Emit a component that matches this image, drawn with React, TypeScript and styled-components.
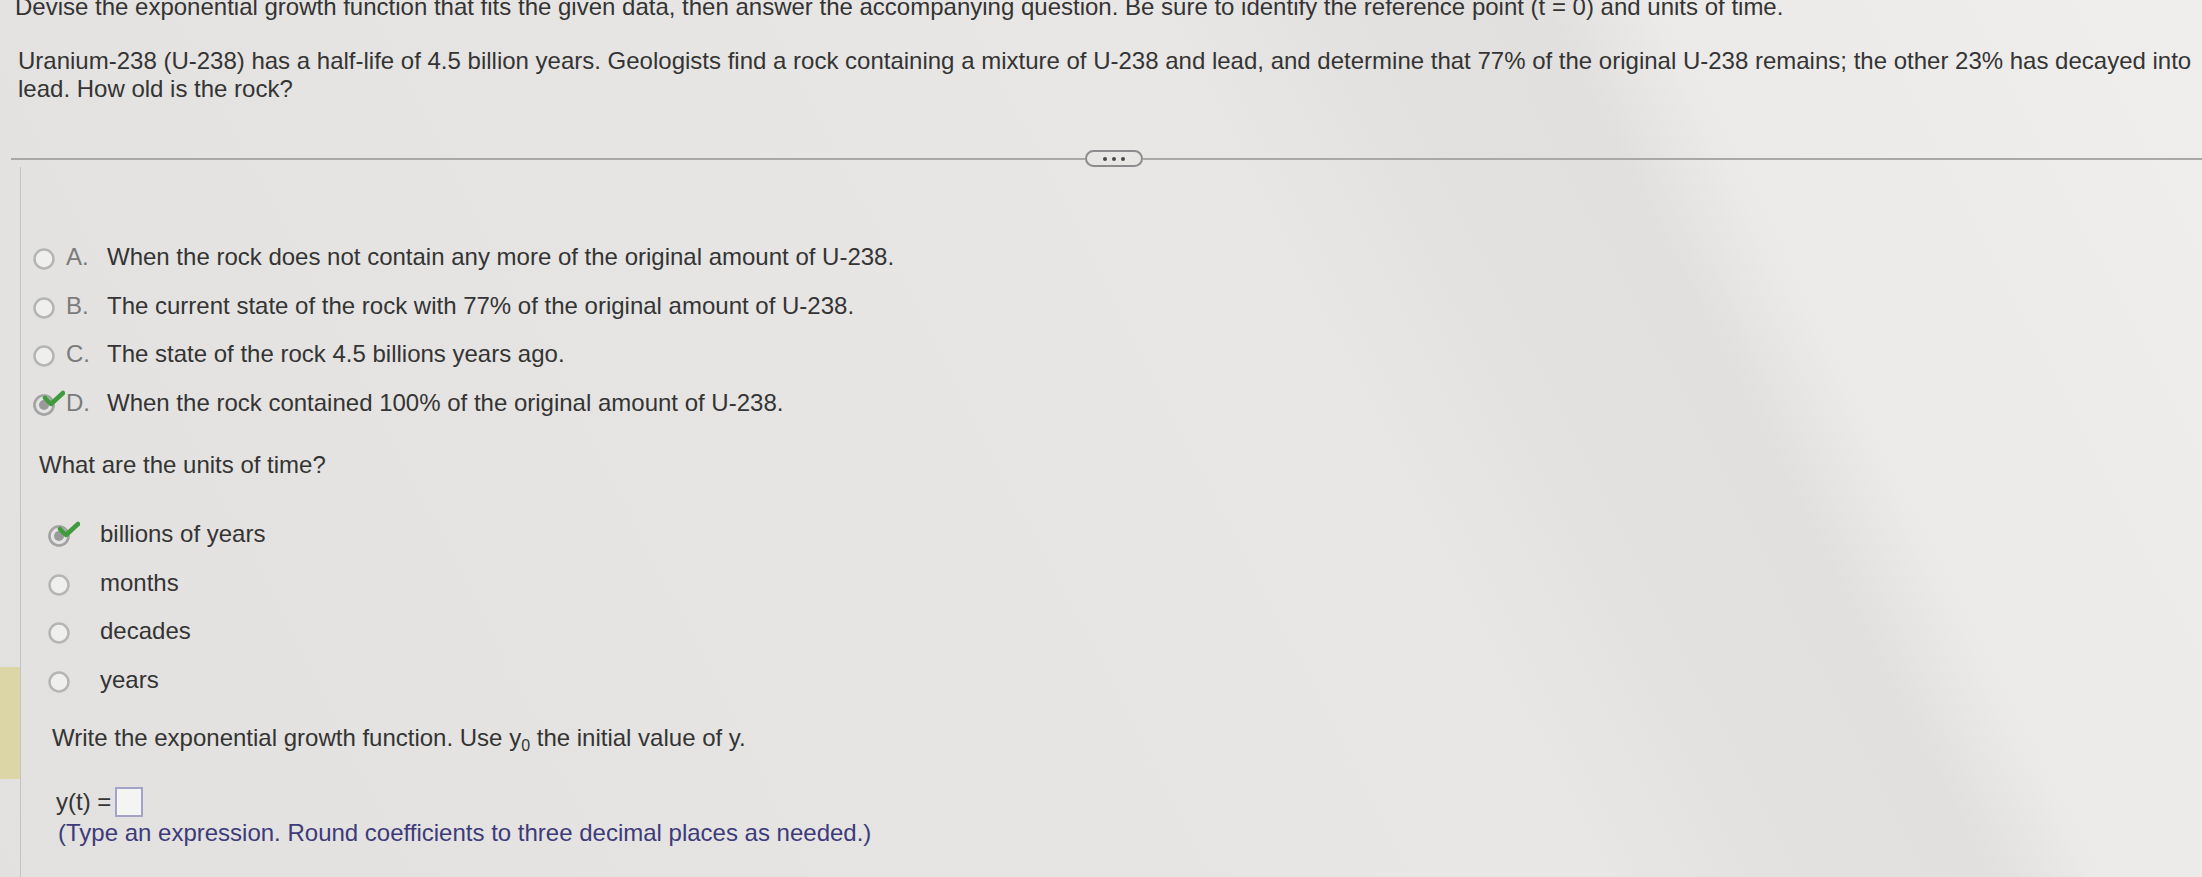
import React from "react";
import styled, { createGlobalStyle } from "styled-components";

const GlobalStyle = createGlobalStyle`
  html, body {
    margin: 0;
    padding: 0;
  }
  body {
    font-family: "Liberation Sans", Arial, sans-serif;
    color: #343434;
  }
`;

const Page = styled.div`
  width: 2202px;
  height: 877px;
  overflow: hidden;
  font-size: 24px;
  background: linear-gradient(
    63deg,
    #e2e1df 0%,
    #e7e6e4 50%,
    #e8e7e5 60%,
    #e2e1df 68%,
    #e1e0de 75%,
    #eceae8 79%,
    #efeeec 100%
  );
`;

const Header = styled.header`
  padding: 0 10px 0 15px;
`;

const Instruction = styled.p`
  margin: -7px 0 0;
  line-height: 28px;
  white-space: nowrap;
`;

const Problem = styled.p`
  margin: 26px 0 0;
  padding-left: 3px;
  line-height: 28px;
`;

const DividerRow = styled.div`
  display: flex;
  align-items: center;
  margin-top: 47px;
  padding-left: 11px;
`;

const Rule = styled.div<{ $grow?: boolean }>`
  height: 2px;
  background: #aaa7a9;
  width: ${(p) => (p.$grow ? "auto" : "1074px")};
  flex: ${(p) => (p.$grow ? "1" : "none")};
`;

const MorePill = styled.div`
  width: 54px;
  height: 13px;
  border: 2px solid #8e8b8e;
  border-radius: 9px;
  display: flex;
  align-items: center;
  justify-content: center;
  gap: 5px;
`;

const Dot = styled.span`
  width: 4px;
  height: 4px;
  border-radius: 50%;
  background: #4a474a;
`;

const Body = styled.div`
  display: flex;
`;

const Gutter = styled.div`
  width: 20px;
  flex: none;
  border-right: 1px solid #c6c4c3;
  height: 710px;
`;

const Marker = styled.div`
  margin-top: 500px;
  height: 112px;
  background: #dcd6a6;
`;

const Content = styled.div`
  flex: 1;
  padding-left: 18px;
`;

const ChoiceList = styled.div<{ $top: number; $indent: number }>`
  display: flex;
  flex-direction: column;
  margin-top: ${(p) => p.$top}px;
  margin-left: ${(p) => p.$indent}px;
`;

const ChoiceRow = styled.div`
  display: flex;
  align-items: center;
  height: 48.5px;
  line-height: 48px;
`;

const RadioSlot = styled.span<{ $width: number }>`
  width: ${(p) => p.$width}px;
  flex: none;
  display: flex;
  align-items: center;
`;

const Letter = styled.span`
  width: 41px;
  flex: none;
  color: #7b7b7b;
`;

const Prompt = styled.p<{ $top: number; $indent: number }>`
  margin: ${(p) => p.$top}px 0 0 ${(p) => p.$indent}px;
  line-height: 48px;
`;

const Sub = styled.sub`
  font-size: 16px;
  vertical-align: -5px;
  line-height: 0;
`;

const AnswerLine = styled.div`
  display: flex;
  align-items: center;
  gap: 4px;
  margin: 25px 0 0 17px;
  height: 30px;
`;

const AnswerBox = styled.span`
  width: 24px;
  height: 26px;
  border: 2px solid #a3a3c8;
  background: #f4f4f2;
`;

const Hint = styled.p`
  margin: 2px 0 0 19px;
  line-height: 28px;
  color: #3d3b7a;
`;

const Radio = ({ checked }: { checked?: boolean }) => (
  <svg width="32" height="28" viewBox="0 0 32 28">
    <circle cx="11" cy="16" r="9.5" fill="#efefed" stroke="#b5b5b5" strokeWidth="2.5" />
    {checked && (
      <>
        <circle cx="11" cy="16" r="9.5" fill="#e4e4e4" stroke="#a3a3a3" strokeWidth="2.5" />
        <circle cx="11" cy="16" r="5" fill="#9a9a9a" />
        <path
          d="M12 9 L18 15 L30 4"
          fill="none"
          stroke="#3f9b3b"
          strokeWidth="4.5"
          strokeLinecap="round"
          strokeLinejoin="round"
        />
      </>
    )}
  </svg>
);

const options = [
  { key: "A.", text: "When the rock does not contain any more of the original amount of U-238." },
  { key: "B.", text: "The current state of the rock with 77% of the original amount of U-238." },
  { key: "C.", text: "The state of the rock 4.5 billions years ago." },
  { key: "D.", text: "When the rock contained 100% of the original amount of U-238.", checked: true },
];

const units = [
  { text: "billions of years", checked: true },
  { text: "months" },
  { text: "decades" },
  { text: "years" },
];

export default function App() {
  return (
    <Page>
      <GlobalStyle />
      <Header>
        <Instruction>
          Devise the exponential growth function that fits the given data, then answer the
          accompanying question. Be sure to identify the reference point (t = 0) and units of time.
        </Instruction>
        <Problem>
          Uranium-238 (U-238) has a half-life of 4.5 billion years. Geologists find a rock containing a
          mixture of U-238 and lead, and determine that 77% of the original U-238 remains; the other 23%
          has decayed into lead. How old is the rock?
        </Problem>
      </Header>

      <DividerRow>
        <Rule />
        <MorePill>
          <Dot />
          <Dot />
          <Dot />
        </MorePill>
        <Rule $grow />
      </DividerRow>

      <Body>
        <Gutter>
          <Marker />
        </Gutter>
        <Content>
          <ChoiceList $top={66} $indent={-6}>
            {options.map((o) => (
              <ChoiceRow key={o.key}>
                <RadioSlot $width={33}>
                  <Radio checked={o.checked} />
                </RadioSlot>
                <Letter>{o.key}</Letter>
                <span>{o.text}</span>
              </ChoiceRow>
            ))}
          </ChoiceList>

          <Prompt $top={14} $indent={0}>
            What are the units of time?
          </Prompt>

          <ChoiceList $top={21} $indent={9}>
            {units.map((u) => (
              <ChoiceRow key={u.text}>
                <RadioSlot $width={52}>
                  <Radio checked={u.checked} />
                </RadioSlot>
                <span>{u.text}</span>
              </ChoiceRow>
            ))}
          </ChoiceList>

          <Prompt $top={10} $indent={13}>
            Write the exponential growth function. Use y<Sub>0</Sub> the initial value of y.
          </Prompt>

          <AnswerLine>
            <span>y(t) =</span>
            <AnswerBox />
          </AnswerLine>
          <Hint>(Type an expression. Round coefficients to three decimal places as needed.)</Hint>
        </Content>
      </Body>
    </Page>
  );
}
